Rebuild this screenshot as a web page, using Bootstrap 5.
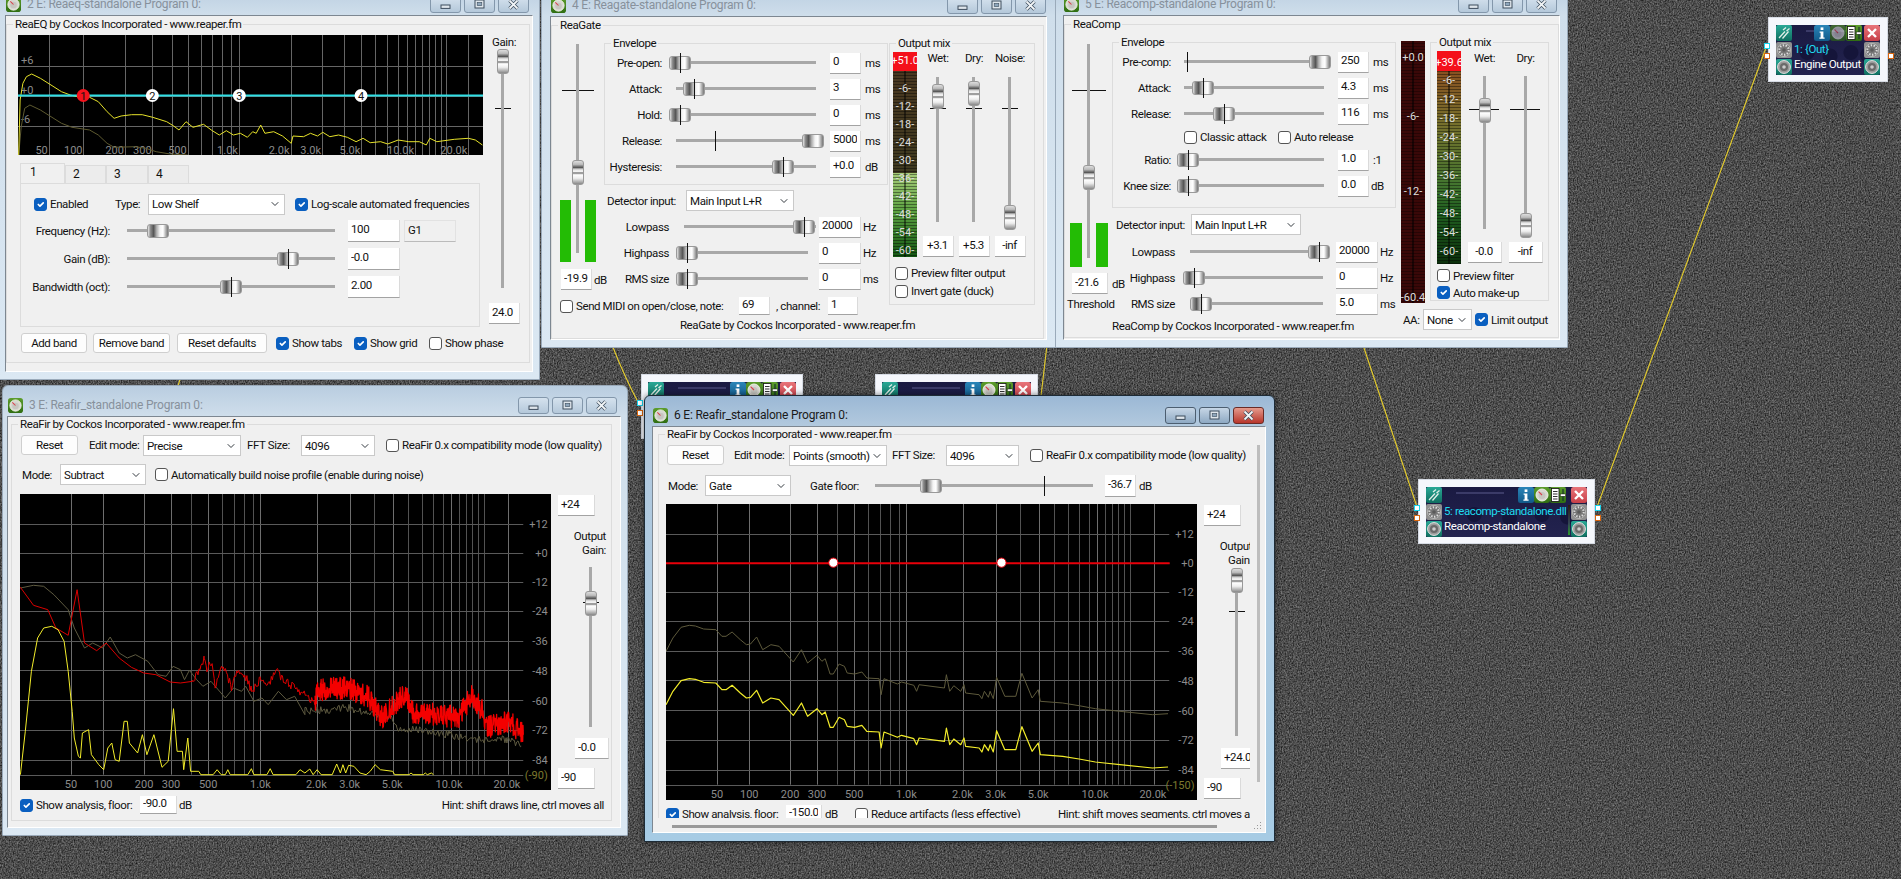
<!doctype html>
<html lang="en">
<head>
<meta charset="utf-8">
<title>REAPER FX routing</title>
<link href="https://cdn.jsdelivr.net/npm/bootstrap@5.3.0/dist/css/bootstrap.min.css" rel="stylesheet">
<style>
html,body{height:100%;margin:0;overflow:hidden;background:#444}
.desk{position:relative;width:1901px;height:879px;overflow:hidden;font-family:Roboto,"Liberation Sans",sans-serif;font-size:11.5px;letter-spacing:-.4px;line-height:14px;color:#111}
.bgn{position:absolute;left:0;top:0}
.win{position:absolute;padding:0 8px 8px;background:linear-gradient(#b9cde0,#cfdeeb 30px,#dbe8f3);border:1px solid #9aaaba;border-radius:6px 6px 0 0;white-space:nowrap}
.tb{height:31px;padding:9px 2px 0 1px;margin-top:-1px;color:#87919c;font-size:12px;letter-spacing:-.2px}
.tb>svg{width:15px;height:15px;margin-right:6px}
.cap{width:31px;height:17px;padding:0;border:1px solid #8397ab;border-radius:3px;background:linear-gradient(#d5e2ee,#b4c8da);margin-left:3px;display:flex;align-items:center;justify-content:center;color:#444}
.cap svg{width:11px;height:11px}
.cl{position:relative;background:#f0f0f0;border-top:1px solid #7d8791;border-left:1px solid #7d8791;border-right:1px solid #fff;border-bottom:1px solid #fff}
.cl *{flex-shrink:0}
.w2{left:-4px;top:-16px;width:544px;height:396px}
.w3{left:2px;top:385px;width:626px;height:451px;padding-left:4px}
.w4{left:541px;top:-15px;width:516px;height:363px;padding-left:8px}
.w5{left:1055px;top:-16px;width:513px;height:364px;padding-left:7px}
.w6{left:644px;top:395px;width:631px;height:447px;padding-left:7px;background:linear-gradient(#9bb8d5,#b2c9de 30px,#a6cbe4);border-color:#1d2b36;box-shadow:0 0 6px #0008}
.w6 .tb{color:#1a1a1a}
.w6 .cap{background:linear-gradient(#c6d6e6,#8ea9c3);border-color:#4c5e70}
.w6 .cap.cls{background:linear-gradient(#e59b8d,#b8352a);color:#fff;border-color:#6a2b26}
.c2{width:528px;height:357px}
.c3{width:614px;height:412px}
.c4{width:497px;height:324px}
.c5{width:497px;height:325px}
.c6{width:614px;height:407px}
.gb{border:1px solid #dcdcdc;padding:0;margin:0;min-width:0}
.gb>legend{float:none;width:auto;font-size:11.5px;line-height:14px;margin:0 0 0 6px;padding:0 2px}
.g2{width:524px;height:346px;margin-top:1px}
.g3{width:601px;height:404px;margin-left:3px}
.g4{width:493px;height:321px;margin-left:0}
.g5{width:495px;height:321px}
.g6{width:602px;height:420px;margin-left:5px}
.gs4{height:149px}
.gs5{height:173px}
.gm4{width:146px;height:269px}
.gm5{width:119px;height:266px}
.form-control.ti{height:21px;min-height:0;padding:0 3px 3px;font-size:11.5px;letter-spacing:-.4px;line-height:14px;border:0;border-bottom:1px solid #a3a3a3;border-right:1px solid #dadada;border-radius:0;background:#fff;color:#111}
.form-control.t22{height:22px}
.form-control.t18{height:18px}
.form-control.gy{background:#f0f0f0;border:1px solid #e2e2e2;border-bottom-color:#bbb}
.form-select.cb{height:21px;font-size:11.5px;letter-spacing:-.4px;line-height:14px;padding:0 16px 0 3px;border:1px solid #c9c9c9;border-radius:0;background-color:#fff;background-position:right 4px center;background-size:10px 8px;color:#111}
.btn.bt{height:20px;font-size:11.5px;letter-spacing:-.4px;line-height:14px;padding:0;background:#fdfdfd;border:1px solid #cfcfcf;border-radius:3px;color:#111}
.ck{white-space:nowrap;gap:3px}
.form-check-input.cx{width:13px;height:13px;margin:0;border:1px solid #555;border-radius:3px;background-color:#fff}
.form-check-input.cx:checked{background-color:#0a5fc0;border-color:#0a5fc0}
.hs{position:relative;height:20px}
.hs::before{content:"";position:absolute;left:0;right:0;top:8px;height:3px;background:#a8a8a8}
.hs i{position:absolute;left:calc(var(--t)*1px - 11px);top:3px;width:22px;height:14px;border:1px solid #9a9a9a;border-radius:3px;background:linear-gradient(90deg,#e6e6e6,#8e8e8e 12%,#555 28%,#aaa 42%,#f4f4f4 60%,#fff 75%,#aaa 90%,#777)}
.hs s{position:absolute;left:calc(var(--k)*1px);top:0;width:1px;height:20px;background:#111}
.vs{position:relative;width:14px}
.vs::before{content:"";position:absolute;left:5px;width:3px;top:0;bottom:0;background:#a8a8a8;z-index:1}
.vs i{position:absolute;left:1px;top:calc(var(--t)*1px);width:12px;height:25px;z-index:2;border:1px solid #999;border-radius:3px;background:linear-gradient(#ddd,#bbb 15%,#555 28%,#ccc 35%,#fff 45%,#777 52%,#fff 60%,#eee 75%,#888)}
.vs s{position:absolute;top:calc(var(--k)*1px);height:1px;left:calc(6.5px - var(--h)*1px);width:calc(var(--h)*2px);background:#111}
.bar{background:#23bc05;width:11px}
.mt{position:relative;overflow:hidden;text-align:center;color:#ddd;font-size:11px;letter-spacing:0;line-height:18px;width:24px}
.mt b{display:block;font-weight:400;color:#fff;background:#f4101a;height:19px;line-height:18px;white-space:nowrap;margin:0 -4px}
.mg{background:linear-gradient(90deg,#0000 11px,#0007 11px,#0007 13px,#0000 13px),repeating-linear-gradient(#0000 0 2px,#0006 2px 3px),linear-gradient(#4a3620 0,#3f3a20 59%,#a6cc78 59%,#5aa040 78%,#125512 100%)}
.mo{background:linear-gradient(90deg,#0000 11px,#0007 11px,#0007 13px,#0000 13px),repeating-linear-gradient(#0000 0 2px,#0006 2px 3px),linear-gradient(#8a4f20 8%,#75702c 35%,#44752f 62%,#1f5e1f 76%,#0b2f0b)}
.mb{background:linear-gradient(90deg,#0000 11px,#0008 11px,#0008 13px,#0000 13px),repeating-linear-gradient(#0000 0 2px,#0005 2px 3px),#3a0808;line-height:14px}
.mb span{display:block;white-space:nowrap;margin-left:-3px;margin-right:-3px}
.mo div{height:19px;line-height:19px}
.mo b{height:20px;line-height:24px}
.chart{background:#000;display:block}
.chart text{font:11px Roboto,"Liberation Sans",sans-serif;letter-spacing:0;fill:#8c8c8c}
.tabs{border:0;flex-wrap:nowrap}
.tabs .nav-link{display:block;height:18px;padding:1px 0 0 7px;border:1px solid #dcdcdc;border-bottom:0;border-radius:0;margin:0;color:#111;background:#ececec;font-size:12px;line-height:14px}
.tabs .nav-link.active{height:20px;padding-left:9px;background:#f0f0f0;color:#111;border-color:#dcdcdc}
.panel{height:144px;border:1px solid #dcdcdc}
.clip{width:597px;height:391px;overflow:hidden}
.hsb{height:3px;background:#9a9a9a;width:545px;margin:7px 0 0 19px}
.vsb{width:3px;height:337px;background:#bdbdbd;margin:18px 0 0 7px}
.grip{position:absolute;right:3px;bottom:2px;width:9px;height:9px}
.node{position:absolute;background:#f5f7fc;box-shadow:0 0 0 1px #d6dbe4;padding:7px;white-space:nowrap}
.n1{left:1769px;top:18px;width:118px;height:63px}
.n2{left:642px;top:375px;width:160px;height:63px;padding:7px 6px}
.n3{left:876px;top:375px;width:161px;height:63px;padding:7px 6px}
.n5{left:1419px;top:480px;width:175px;height:63px}
.art{height:50px;background:radial-gradient(circle at 30% 55%,#15153a 0 7px,#0000 8px),radial-gradient(circle at 52% 62%,#15153a 0 7px,#0000 8px),radial-gradient(circle at 72% 55%,#15153a 0 7px,#0000 8px),radial-gradient(circle at 88% 60%,#15153a 0 7px,#0000 8px),linear-gradient(#1a1a42,#23234f);overflow:hidden}
.art svg{width:16px;height:16px;display:block}
.art .ico{gap:1px}
.ctr{padding-left:2px;min-width:0}
.ctr .top{height:16px;gap:0;padding-right:2px;background:linear-gradient(#3b3b68,#3b3b68) no-repeat 12px 5px/48px 2px}
.nm{color:#1fdcf0;font-size:11.5px;letter-spacing:-.4px;line-height:15px;margin-top:1px}
.nw{color:#fff;font-size:11.5px;letter-spacing:-.4px;line-height:15px}
.mtr{width:2px;height:30px;margin:18px 1px 0 0;background:linear-gradient(#2a1a10,#345 60%,#2a9a2a)}
.dim{opacity:.6}
.pin{position:absolute;width:6px;height:6px;background:#fff;border:1.5px solid #d9660f}
.pin.c{border-color:#19d4ee}
.w11{width:11px}.w12{width:12px}.w20x{width:20px}.w24{width:24px}.w30{width:30px}.w31{width:31px}.w33{width:33px}.w34{width:34px}.w36{width:36px}.w37{width:37px}.w38{width:38px}.w41{width:41px}.w42{width:42px}.w45{width:45px}.w47{width:47px}.w49{width:49px}.w52{width:52px}.w54{width:54px}.w55{width:55px}.w57{width:57px}.w58{width:58px}.w61{width:61px}.w63{width:63px}.w65{width:65px}.w66{width:66px}.w73{width:73px}.w74{width:74px}.w75{width:75px}.w77{width:77px}.w78{width:78px}.w79{width:79px}.w81{width:81px}.w86{width:86px}.w89{width:89px}.w90{width:90px}.w94{width:94px}.w98{width:98px}.w108{width:108px}.w110{width:110px}.w120{width:120px}.w132{width:132px}.w133{width:133px}.w134{width:134px}.w137{width:137px}.w139{width:139px}.w140{width:140px}.w179{width:179px}.w203{width:203px}.w208{width:208px}.w218{width:218px}.w284{width:284px}.w336{width:336px}.w337{width:337px}.w460{width:460px}.w465{width:465px}
.l1{margin-left:1px}.l2{margin-left:2px}.l3{margin-left:3px}.l4{margin-left:4px}.l5{margin-left:5px}.l6{margin-left:6px}.l7{margin-left:7px}.l8{margin-left:8px}.l9{margin-left:9px}.l10{margin-left:10px}.l11{margin-left:11px}.l12{margin-left:12px}.l13{margin-left:13px}.l14{margin-left:14px}.l15{margin-left:15px}.l17{margin-left:17px}.l19{margin-left:19px}.l24x{margin-left:24px}.l33x{margin-left:33px}.l71{margin-left:71px}
.t1{margin-top:1px}.t2{margin-top:2px}.t3{margin-top:3px}.t4{margin-top:4px}.t5{margin-top:5px}.t6{margin-top:6px}.t7{margin-top:7px}.t8{margin-top:8px}.t9{margin-top:9px}.t10{margin-top:10px}.t11{margin-top:11px}.t12{margin-top:12px}.t13{margin-top:13px}.t15{margin-top:15px}
.rw26{height:26px}.rw28{height:28px}.rw18{height:18px}.rw17{height:17px}.rw20{height:20px}.rw21{height:21px}.rw22{height:22px}.rw23{height:23px}
.h44{height:44px}.h62{height:62px}.h145{height:145px}.h153{height:153px}.h160{height:160px}.h168{height:168px}.h205{height:205px}.h206{height:206px}.h209{height:209px}.h212{height:212px}.h213{height:213px}.h214{height:214px}.h218{height:218px}.h223{height:223px}.h239{height:239px}.h262{height:262px}
.mb .mg6{margin-top:45px}.mb .mg7{margin-top:61px}.mb .mg8{margin-top:92px}
.r7{margin-right:7px}
</style>
</head>
<body>
<div class="desk">
<svg width="0" height="0" class="position-absolute">
  <defs>
    <linearGradient id="gT" x1="0" y1="0" x2="0" y2="1"><stop offset="0" stop-color="#2aa896"/><stop offset="1" stop-color="#0f6f60"/></linearGradient>
    <linearGradient id="gG" x1="0" y1="0" x2="0" y2="1"><stop offset="0" stop-color="#5d9d2c"/><stop offset="1" stop-color="#2f6d12"/></linearGradient>
    <linearGradient id="gB" x1="0" y1="0" x2="0" y2="1"><stop offset="0" stop-color="#2a85b8"/><stop offset="1" stop-color="#125a8a"/></linearGradient>
    <linearGradient id="gR" x1="0" y1="0" x2="0" y2="1"><stop offset="0" stop-color="#e8747a"/><stop offset="1" stop-color="#c73f48"/></linearGradient>
  </defs>
  <symbol id="link" viewBox="0 0 16 16"><rect width="16" height="16" rx="2" fill="url(#gT)"/><path d="M3 13 9 6.5M6.5 13.5l6-7M7 5l3-2.5M10.5 6l3-2.5" stroke="#dfeee8" stroke-width="1.3" fill="none"/></symbol>
  <symbol id="dial" viewBox="0 0 16 16"><rect width="16" height="16" rx="2" fill="#8f8f8f"/><circle cx="8" cy="8" r="6.6" fill="#777" stroke="#b4b4b4"/><circle cx="8" cy="8" r="4.7" fill="none" stroke="#ddd" stroke-width="2" stroke-dasharray="1.4 1.5"/><circle cx="8" cy="8" r="1.8" fill="#5a5a5a"/></symbol>
  <symbol id="spk" viewBox="0 0 16 16"><rect width="16" height="16" rx="2" fill="url(#gT)"/><circle cx="8" cy="8" r="6.4" fill="#9a9a9a" stroke="#e4e4e4"/><circle cx="8" cy="8" r="4" fill="#6a6a6a"/><circle cx="8" cy="8" r="1.8" fill="#ccc"/></symbol>
  <symbol id="info" viewBox="0 0 16 16"><rect width="16" height="16" rx="2.5" fill="url(#gB)"/><rect x="6.6" y="2.4" width="2.8" height="2.6" fill="#fff"/><path d="M5.6 6.4h3.8v6h1.2v1.4H5.4v-1.4h1.2V7.8h-1z" fill="#fff"/></symbol>
  <symbol id="gauge" viewBox="0 0 16 16"><rect width="16" height="16" rx="3" fill="url(#gG)"/><circle cx="8" cy="8" r="6" fill="#d8d8d2" stroke="#eef2e4"/><circle cx="8" cy="8.5" r="3.5" fill="#c6c6c0"/><path d="M4.6 4.6 8 8" stroke="#d8404a" stroke-width="1.1"/></symbol>
  <symbol id="fader" viewBox="0 0 16 16"><rect width="16" height="16" rx="2" fill="url(#gG)"/><rect x="1.5" y="1.5" width="7.5" height="13" fill="#fff" stroke="#111" stroke-width=".8"/><path d="M3 4.5h4.5M3 7h4.5M3 9.5h4.5M3 12h4.5" stroke="#333" stroke-width="1.1"/><path d="M13 2v12" stroke="#123" stroke-width="1"/><rect x="10.4" y="7" width="5" height="2.2" fill="#fff" stroke="#111" stroke-width=".4"/></symbol>
  <symbol id="xic" viewBox="0 0 16 16"><rect width="16" height="16" rx="2.5" fill="url(#gR)"/><path d="M4 4 12 12M12 4 4 12" stroke="#fff" stroke-width="2.4"/></symbol>
  <symbol id="cmin" viewBox="0 0 11 11"><rect x="1" y="6" width="9" height="3.4" fill="#dfe6ec" stroke="#3c4c5c"/></symbol>
  <symbol id="cmax" viewBox="0 0 11 11"><rect x="1" y="1" width="9" height="8" fill="#dfe6ec" stroke="#3c4c5c"/><rect x="3.2" y="3.4" width="4.6" height="3.2" fill="#8ea6bc" stroke="#3c4c5c" stroke-width=".6"/></symbol>
  <symbol id="cx" viewBox="0 0 11 11"><path d="M1.5 1.5 9.5 9.5M9.5 1.5 1.5 9.5" stroke="#3c4c5c" stroke-width="3.2"/><path d="M1.5 1.5 9.5 9.5M9.5 1.5 1.5 9.5" stroke="#f2f5f7" stroke-width="1.8"/></symbol>
</svg>

<svg class="bgn" width="1901" height="879" aria-hidden="true">
  <filter id="noise" x="0" y="0" width="100%" height="100%" color-interpolation-filters="sRGB">
    <feTurbulence type="fractalNoise" baseFrequency=".75 .6" numOctaves="2" seed="4"/>
    <feColorMatrix values=".55 0 0 0 .025  .55 0 0 0 .025  .55 0 0 0 .025  0 0 0 0 1"/>
  </filter>
  <rect width="1901" height="879" filter="url(#noise)"/>
  <g fill="none" stroke="#e8cf2c" stroke-width="1.1">
    <path d="M1597 507 1767 45"/>
    <path d="M1363 345 1417 507"/>
    <path d="M1047 345 1041 396"/>
    <path d="M612 345 Q626 380 638 402"/>
    <path d="M181 376 178 386"/>
  </g>
</svg>

<!-- nodes -->
<div class="node n2"><div class="art d-flex"><svg class="d-block"><use href="#link"/></svg><div class="ctr flex-fill"><div class="top d-flex justify-content-end"><svg><use href="#info"/></svg><svg><use href="#gauge"/></svg><svg><use href="#fader"/></svg></div></div><svg class="d-block"><use href="#xic"/></svg></div></div>
<div class="node n3"><div class="art d-flex"><svg class="d-block"><use href="#link"/></svg><div class="ctr flex-fill"><div class="top d-flex justify-content-end"><svg><use href="#info"/></svg><svg><use href="#gauge"/></svg><svg><use href="#fader"/></svg></div></div><svg class="d-block"><use href="#xic"/></svg></div></div>
<i class="pin c" style="left:637px;top:400px"></i><i class="pin" style="left:637px;top:410px"></i>

<div class="node n5"><div class="art d-flex">
  <div class="ico d-flex flex-column"><svg><use href="#link"/></svg><svg><use href="#dial"/></svg><svg><use href="#spk"/></svg></div>
  <div class="ctr flex-fill"><div class="top d-flex justify-content-end"><svg><use href="#info"/></svg><svg><use href="#gauge"/></svg><svg><use href="#fader"/></svg></div><div class="nm">5: reacomp-standalone.dll</div><div class="nw">Reacomp-standalone</div></div>
  <div class="mtr"></div>
  <div class="ico d-flex flex-column"><svg><use href="#xic"/></svg><svg><use href="#dial"/></svg><svg><use href="#spk"/></svg></div>
</div></div>
<i class="pin c" style="left:1414px;top:505px"></i><i class="pin" style="left:1414px;top:515px"></i>
<i class="pin c" style="left:1595px;top:505px"></i><i class="pin" style="left:1595px;top:515px"></i>

<div class="node n1"><div class="art d-flex">
  <div class="ico d-flex flex-column"><svg><use href="#link"/></svg><svg><use href="#dial"/></svg><svg><use href="#spk"/></svg></div>
  <div class="ctr flex-fill"><div class="top d-flex justify-content-end"><svg><use href="#info"/></svg><svg class="dim"><use href="#gauge"/></svg><svg><use href="#fader"/></svg></div><div class="nm">1: {Out}</div><div class="nw">Engine Output</div></div>
  <div class="ico d-flex flex-column"><svg><use href="#xic"/></svg><svg><use href="#dial"/></svg><svg><use href="#spk"/></svg></div>
</div></div>
<i class="pin c" style="left:1764px;top:43px"></i><i class="pin" style="left:1764px;top:53px"></i><i class="pin" style="left:1888px;top:53px"></i>

<!-- ReaEQ -->
<div class="win w2">
  <div class="tb d-flex align-items-center"><svg><use href="#gauge"/></svg><span>2 E: Reaeq-standalone Program 0:</span><div class="ms-auto d-flex"><button class="cap"><svg><use href="#cmin"/></svg></button><button class="cap"><svg><use href="#cmax"/></svg></button><button class="cap"><svg><use href="#cx"/></svg></button></div></div>
  <div class="cl c2">
    <fieldset class="gb g2"><legend>ReaEQ by Cockos Incorporated - www.reaper.fm</legend>
      <div class="d-flex">
        <div class="w465 l11">
          <svg id="cEq" class="chart t4" width="465" height="120"></svg>
          <ul class="nav nav-tabs tabs l2 t8 align-items-end">
            <li class="nav-item w45"><a class="nav-link active" href="#">1</a></li>
            <li class="nav-item w41"><a class="nav-link" href="#">2</a></li>
            <li class="nav-item w42"><a class="nav-link" href="#">3</a></li>
            <li class="nav-item w41"><a class="nav-link" href="#">4</a></li>
          </ul>
          <div class="panel w460 l2">
            <div class="d-flex align-items-center rw20 t10">
              <label class="ck d-flex align-items-center w81 l13"><input class="form-check-input cx" type="checkbox" checked><span>Enabled</span></label>
              <span class="w33">Type:</span>
              <select class="form-select cb w137"><option>Low Shelf</option></select>
              <label class="ck d-flex align-items-center l10"><input class="form-check-input cx" type="checkbox" checked><span>Log-scale automated frequencies</span></label>
            </div>
            <div class="t3">
              <div class="d-flex align-items-center rw28"><span class="w89 text-end">Frequency (Hz):</span><div class="hs w208 l17" style="--t:31"><i></i></div><input class="form-control ti t22 w52 l13" value="100"><input class="form-control ti t22 gy w52 l4" value="G1"></div>
              <div class="d-flex align-items-center rw28"><span class="w89 text-end">Gain (dB):</span><div class="hs w208 l17" style="--t:161;--k:161"><i></i><s></s></div><input class="form-control ti t22 w52 l13" value="-0.0"></div>
              <div class="d-flex align-items-center rw28"><span class="w89 text-end">Bandwidth (oct):</span><div class="hs w208 l17" style="--t:104;--k:104"><i></i><s></s></div><input class="form-control ti t22 w52 l13" value="2.00"></div>
            </div>
          </div>
        </div>
        <div class="w52">
          <div class="l9 t4">Gain:</div>
          <div class="vs h239 l13" style="--t:0;--k:59;--h:8"><s></s><i></i></div>
          <input class="form-control ti w31 l6 t15" value="24.0">
        </div>
      </div>
      <div class="d-flex align-items-center t6">
        <button class="btn bt w66 l14">Add band</button><button class="btn bt w77 l6">Remove band</button><button class="btn bt w90 l7">Reset defaults</button>
        <label class="ck d-flex align-items-center w78 l9"><input class="form-check-input cx" type="checkbox" checked><span>Show tabs</span></label>
        <label class="ck d-flex align-items-center w75"><input class="form-check-input cx" type="checkbox" checked><span>Show grid</span></label>
        <label class="ck d-flex align-items-center"><input class="form-check-input cx" type="checkbox"><span>Show phase</span></label>
      </div>
    </fieldset>
  </div>
</div>

<!-- ReaFir 3 -->
<div class="win w3">
  <div class="tb d-flex align-items-center"><svg><use href="#gauge"/></svg><span>3 E: Reafir_standalone Program 0:</span><div class="ms-auto d-flex"><button class="cap"><svg><use href="#cmin"/></svg></button><button class="cap"><svg><use href="#cmax"/></svg></button><button class="cap"><svg><use href="#cx"/></svg></button></div></div>
  <div class="cl c3">
    <fieldset class="gb g3"><legend>ReaFir by Cockos Incorporated - www.reaper.fm</legend>
      <div class="d-flex align-items-start rw22 t4">
        <button class="btn bt w57 l9">Reset</button><span class="w54 l11 t3">Edit mode:</span><select class="form-select cb w98"><option>Precise</option></select><span class="w54 l6 t3">FFT Size:</span><select class="form-select cb w74"><option>4096</option></select>
        <label class="ck d-flex align-items-center l11 t3"><input class="form-check-input cx" type="checkbox"><span>ReaFir 0.x compatibility mode (low quality)</span></label>
      </div>
      <div class="d-flex align-items-center rw21 t7">
        <span class="w38 l10">Mode:</span><select class="form-select cb w86"><option>Subtract</option></select>
        <label class="ck d-flex align-items-center l9"><input class="form-check-input cx" type="checkbox"><span>Automatically build noise profile (enable during noise)</span></label>
      </div>
      <div class="d-flex t9">
        <svg id="cF3" class="chart l8" width="531" height="296"></svg>
        <div class="w61">
          <input class="form-control ti w37 l7 t1" value="+24">
          <div class="w55 text-end t13">Output<br>Gain:</div>
          <div class="vs h160 t10 l33x" style="--t:24;--k:35;--h:8"><s></s><i></i></div>
          <input class="form-control ti w34 t11 l24x" value="-0.0">
          <input class="form-control ti w37 l7 t9" value="-90">
        </div>
      </div>
      <div class="d-flex align-items-center t6">
        <label class="ck d-flex align-items-center w120 l8"><input class="form-check-input cx" type="checkbox" checked><span>Show analysis, floor:</span></label>
        <input class="form-control ti t18 w37" value="-90.0"><span class="l2">dB</span>
        <span class="ms-auto r7">Hint: shift draws line, ctrl moves all</span>
      </div>
    </fieldset>
  </div>
</div>

<!-- ReaGate -->
<div class="win w4">
  <div class="tb d-flex align-items-center"><svg><use href="#gauge"/></svg><span>4 E: Reagate-standalone Program 0:</span><div class="ms-auto d-flex"><button class="cap"><svg><use href="#cmin"/></svg></button><button class="cap"><svg><use href="#cmax"/></svg></button><button class="cap"><svg><use href="#cx"/></svg></button></div></div>
  <div class="cl c4">
    <fieldset class="gb g4 t1"><legend>ReaGate</legend>
      <div class="d-flex">
        <div class="w337">
          <div class="d-flex">
            <div class="w52">
              <div class="d-flex align-items-end h218 t12 l8"><div class="bar h62"></div><div class="vs h209 align-self-start" style="--t:116;--k:46;--h:16"><s></s><i></i></div><div class="bar h62"></div></div>
              <div class="d-flex align-items-center t7 l9"><input class="form-control ti w31" value="-19.9"><span class="l2">dB</span></div>
            </div>
            <div class="w284">
              <fieldset class="gb gs4 t4"><legend>Envelope</legend>
                <div class="d-flex align-items-center rw26"><span class="w57 text-end">Pre-open:</span><div class="hs w140 l14" style="--t:4;--k:4"><i></i><s></s></div><input class="form-control ti w31 l14" value="0"><span class="l4">ms</span></div>
                <div class="d-flex align-items-center rw26"><span class="w57 text-end">Attack:</span><div class="hs w140 l14" style="--t:18;--k:18"><i></i><s></s></div><input class="form-control ti w31 l14" value="3"><span class="l4">ms</span></div>
                <div class="d-flex align-items-center rw26"><span class="w57 text-end">Hold:</span><div class="hs w140 l14" style="--t:4;--k:4"><i></i><s></s></div><input class="form-control ti w31 l14" value="0"><span class="l4">ms</span></div>
                <div class="d-flex align-items-center rw26"><span class="w57 text-end">Release:</span><div class="hs w140 l14" style="--t:137;--k:39"><i></i><s></s></div><input class="form-control ti w31 l14" value="5000"><span class="l4">ms</span></div>
                <div class="d-flex align-items-center rw26"><span class="w57 text-end">Hysteresis:</span><div class="hs w140 l14" style="--t:107;--k:107"><i></i><s></s></div><input class="form-control ti w31 l14" value="+0.0"><span class="l4">dB</span></div>
              </fieldset>
              <div class="d-flex align-items-center t5 l3"><span class="w79">Detector input:</span><select class="form-select cb w108"><option>Main Input L+R</option></select></div>
              <div class="t3">
                <div class="d-flex align-items-center rw26"><span class="w65 text-end">Lowpass</span><div class="hs w132 l15" style="--t:120;--k:120"><i></i><s></s></div><input class="form-control ti w42 l3" value="20000"><span class="l2">Hz</span></div>
                <div class="d-flex align-items-center rw26"><span class="w65 text-end">Highpass</span><div class="hs w132 l7" style="--t:11;--k:11"><i></i><s></s></div><input class="form-control ti w42 l11" value="0"><span class="l2">Hz</span></div>
                <div class="d-flex align-items-center rw26"><span class="w65 text-end">RMS size</span><div class="hs w132 l7" style="--t:11;--k:11"><i></i><s></s></div><input class="form-control ti w42 l11" value="0"><span class="l2">ms</span></div>
              </div>
            </div>
          </div>
          <div class="d-flex align-items-center t5">
            <label class="ck d-flex align-items-center w179 l8"><input class="form-check-input cx" type="checkbox"><span>Send MIDI on open/close, note:</span></label>
            <input class="form-control ti t18 w31" value="69"><span class="w52 l6">, channel:</span><input class="form-control ti t18 w30" value="1">
          </div>
        </div>
        <fieldset class="gb gm4 t4"><legend>Output mix</legend>
          <div class="d-flex">
            <div class="mt mg h205 t2 l3"><b>+51.0</b><div class="t9"></div><div>-6-</div><div>-12-</div><div>-18-</div><div>-24-</div><div>-30-</div><div>-36-</div><div>-42-</div><div>-48-</div><div>-54-</div><div>-60-</div></div>
            <div class="d-flex l3 t1">
              <div class="w36 h206 d-flex flex-column align-items-center"><span>Wet:</span><div class="vs h145 t12" style="--t:7;--k:31;--h:8"><s></s><i></i></div><input class="form-control ti w31 mt-auto text-center" value="+3.1"></div>
              <div class="w36 h206 d-flex flex-column align-items-center"><span>Dry:</span><div class="vs h145 t12" style="--t:4;--k:31;--h:8"><s></s><i></i></div><input class="form-control ti w31 mt-auto text-center" value="+5.3"></div>
              <div class="w36 h206 d-flex flex-column align-items-center"><span>Noise:</span><div class="vs h153 t12" style="--t:128;--k:31;--h:8"><s></s><i></i></div><input class="form-control ti w31 mt-auto text-center" value="-inf"></div>
            </div>
          </div>
          <label class="ck d-flex align-items-center rw18 l5 t7"><input class="form-check-input cx" type="checkbox"><span>Preview filter output</span></label>
          <label class="ck d-flex align-items-center rw18 l5"><input class="form-check-input cx" type="checkbox"><span>Invert gate (duck)</span></label>
        </fieldset>
      </div>
      <div class="text-center t3">ReaGate by Cockos Incorporated - www.reaper.fm</div>
    </fieldset>
  </div>
</div>

<!-- ReaComp -->
<div class="win w5">
  <div class="tb d-flex align-items-center"><svg><use href="#gauge"/></svg><span>5 E: Reacomp-standalone Program 0:</span><div class="ms-auto d-flex"><button class="cap"><svg><use href="#cmin"/></svg></button><button class="cap"><svg><use href="#cmax"/></svg></button><button class="cap"><svg><use href="#cx"/></svg></button></div></div>
  <div class="cl c5">
    <fieldset class="gb g5 t1"><legend>ReaComp</legend>
      <div class="d-flex">
        <div class="w336">
          <div class="d-flex">
            <div class="w47">
              <div class="d-flex align-items-end h223 t13 l5"><div class="bar w12 h44"></div><div class="vs h214 align-self-start" style="--t:121;--k:46;--h:17"><s></s><i></i></div><div class="bar w12 h44"></div></div>
              <div class="d-flex align-items-center t6 l7"><input class="form-control ti w36" value="-21.6"><span class="l4">dB</span></div>
              <div class="l2 t3">Threshold</div>
            </div>
            <div class="w284">
              <fieldset class="gb gs5 t4"><legend>Envelope</legend>
                <div class="d-flex align-items-center rw26"><span class="w58 text-end">Pre-comp:</span><div class="hs w140 l13" style="--t:136;--k:3"><i></i><s></s></div><input class="form-control ti w31 l14" value="250"><span class="l4">ms</span></div>
                <div class="d-flex align-items-center rw26"><span class="w58 text-end">Attack:</span><div class="hs w140 l13" style="--t:19;--k:19"><i></i><s></s></div><input class="form-control ti w31 l14" value="4.3"><span class="l4">ms</span></div>
                <div class="d-flex align-items-center rw26"><span class="w58 text-end">Release:</span><div class="hs w140 l13" style="--t:40;--k:40"><i></i><s></s></div><input class="form-control ti w31 l14" value="116"><span class="l4">ms</span></div>
                <div class="d-flex align-items-center rw20 l71"><label class="ck d-flex align-items-center w94"><input class="form-check-input cx" type="checkbox"><span>Classic attack</span></label><label class="ck d-flex align-items-center"><input class="form-check-input cx" type="checkbox"><span>Auto release</span></label></div>
                <div class="d-flex align-items-center rw26"><span class="w58 text-end">Ratio:</span><div class="hs w140 l13" style="--t:4;--k:4"><i></i><s></s></div><input class="form-control ti w31 l14" value="1.0"><span class="l4">:1</span></div>
                <div class="d-flex align-items-center rw26"><span class="w58 text-end">Knee size:</span><div class="hs w140 l13" style="--t:4;--k:4"><i></i><s></s></div><input class="form-control ti w31 l14" value="0.0"><span class="l2">dB</span></div>
              </fieldset>
              <div class="d-flex align-items-center t6 l4"><span class="w75">Detector input:</span><select class="form-select cb w110"><option>Main Input L+R</option></select></div>
              <div class="t4">
                <div class="d-flex align-items-center rw26"><span class="w63 text-end">Lowpass</span><div class="hs w134 l15" style="--t:129;--k:129"><i></i><s></s></div><input class="form-control ti w42 l12" value="20000"><span class="l2">Hz</span></div>
                <div class="d-flex align-items-center rw26"><span class="w63 text-end">Highpass</span><div class="hs w139 l9" style="--t:10;--k:10"><i></i><s></s></div><input class="form-control ti w42 l13" value="0"><span class="l2">Hz</span></div>
                <div class="d-flex align-items-center rw26"><span class="w63 text-end">RMS size</span><div class="hs w133 l15" style="--t:11;--k:11"><i></i><s></s></div><input class="form-control ti w42 l13" value="5.0"><span class="l2">ms</span></div>
              </div>
            </div>
          </div>
          <div class="text-center t2">ReaComp by Cockos Incorporated - www.reaper.fm</div>
        </div>
        <div>
          <div class="d-flex">
            <div class="mt mb h262 t10"><span class="t10">+0.0</span><span class="mg6">-6-</span><span class="mg7">-12-</span><span class="mg8">-60.4</span></div>
            <fieldset class="gb gm5 l5 t4"><legend>Output mix</legend>
              <div class="d-flex">
                <div class="mt mo h213 t2 l6"><b>+39.6</b><div>-6-</div><div>-12-</div><div>-18-</div><div>-24-</div><div>-30-</div><div>-36-</div><div>-42-</div><div>-48-</div><div>-54-</div><div>-60-</div></div>
                <div class="d-flex l3 t2">
                  <div class="w41 h212 d-flex flex-column align-items-center"><span>Wet:</span><div class="vs t11 h153" style="--t:22;--k:33;--h:15"><s></s><i></i></div><input class="form-control ti w34 mt-auto text-center" value="-0.0"></div>
                  <div class="w41 h212 d-flex flex-column align-items-center"><span>Dry:</span><div class="vs t11 h160" style="--t:137;--k:33;--h:15"><s></s><i></i></div><input class="form-control ti w34 mt-auto text-center" value="-inf"></div>
                </div>
              </div>
              <label class="ck d-flex align-items-center rw17 l6 t3"><input class="form-check-input cx" type="checkbox"><span>Preview filter</span></label>
              <label class="ck d-flex align-items-center rw17 l6"><input class="form-check-input cx" type="checkbox" checked><span>Auto make-up</span></label>
            </fieldset>
          </div>
          <div class="d-flex align-items-center t6 l2"><span class="w20x">AA:</span><select class="form-select cb w49"><option>None</option></select><label class="ck d-flex align-items-center l3"><input class="form-check-input cx" type="checkbox" checked><span>Limit output</span></label></div>
        </div>
      </div>
    </fieldset>
  </div>
</div>

<!-- ReaFir 6 (active) -->
<div class="win w6">
  <div class="tb d-flex align-items-center"><svg><use href="#gauge"/></svg><span>6 E: Reafir_standalone Program 0:</span><div class="ms-auto d-flex"><button class="cap"><svg><use href="#cmin"/></svg></button><button class="cap"><svg><use href="#cmax"/></svg></button><button class="cap cls"><svg><use href="#cx"/></svg></button></div></div>
  <div class="cl c6 d-flex">
    <div>
      <div class="clip">
        <fieldset class="gb g6"><legend>ReaFir by Cockos Incorporated - www.reaper.fm</legend>
          <div class="d-flex align-items-start rw22 t4">
            <button class="btn bt w57 l8">Reset</button><span class="w55 l10 t3">Edit mode:</span><select class="form-select cb w98"><option>Points (smooth)</option></select><span class="w54 l5 t3">FFT Size:</span><select class="form-select cb w73"><option>4096</option></select>
            <label class="ck d-flex align-items-center l11 t3"><input class="form-check-input cx" type="checkbox"><span>ReaFir 0.x compatibility mode (low quality)</span></label>
          </div>
          <div class="d-flex align-items-center rw23 t7">
            <span class="w37 l9">Mode:</span><select class="form-select cb w86"><option>Gate</option></select><span class="w65 l19">Gate floor:</span>
            <div class="hs w218" style="--t:56;--k:169"><i></i><s></s></div><input class="form-control ti t22 w31 l12" value="-36.7"><span class="l3">dB</span>
          </div>
          <div class="d-flex t7">
            <svg id="cF6" class="chart l7" width="531" height="296"></svg>
            <div class="w61">
              <input class="form-control ti w37 l7 t1" value="+24">
              <div class="w55 text-end t13">Output<br>Gain:</div>
              <div class="vs h168 t1 l33x" style="--t:0;--k:43;--h:8"><s></s><i></i></div>
              <input class="form-control ti w37 t12 l24x" value="+24.0">
              <input class="form-control ti w37 l7 t9" value="-90">
            </div>
          </div>
          <div class="d-flex align-items-center t5">
            <label class="ck d-flex align-items-center w120 l7"><input class="form-check-input cx" type="checkbox" checked><span>Show analysis, floor:</span></label>
            <input class="form-control ti t18 w36" value="-150.0"><span class="w30 l3">dB</span>
            <label class="ck d-flex align-items-center w203"><input class="form-check-input cx" type="checkbox"><span>Reduce artifacts (less effective)</span></label>
            <span>Hint: shift moves segments, ctrl moves all</span>
          </div>
        </fieldset>
      </div>
      <div class="hsb"></div>
    </div>
    <div class="vsb"></div>
    <svg class="grip" viewBox="0 0 9 9"><path d="M7 1h1v1H7zM4 4h1v1H4zM7 4h1v1H7zM1 7h1v1H1zM4 7h1v1H4zM7 7h1v1H7z" fill="#999"/></svg>
  </div>
</div>
</div>

<script src="https://cdn.jsdelivr.net/npm/bootstrap@5.3.0/dist/js/bootstrap.bundle.min.js"></script>
<script>
const NS='http://www.w3.org/2000/svg';
function el(s,n,a,t){const e=document.createElementNS(NS,n);for(const k in a)e.setAttribute(k,a[k]);if(t!=null)e.textContent=t;s.appendChild(e);return e}
let seed=12345;function R(){seed=(seed*1664525+1013904223)>>>0;return seed/4294967296}
function mk(s,ox,oy,sx,sy){return{s,X:x=>(x-ox)/sx,Y:y=>(y-oy)/sy}}
function line(c,p,col,w,dy){dy=dy||0;el(c.s,'polyline',{points:p.map(q=>c.X(q[0]).toFixed(1)+','+c.Y(q[1]+dy).toFixed(1)).join(' '),fill:'none',stroke:col,'stroke-width':w||1,'stroke-linejoin':'round'})}
function jit(p,step,amp){const o=[];for(let i=0;i<p.length-1;i++){const[a,b]=p[i],[c,d]=p[i+1];for(let x=a;x<c;x+=step){const f=(x-a)/(c-a);o.push([x,b+(d-b)*f+(R()-.5)*2*amp])}}o.push(p[p.length-1]);return o}
function pts(a){const o=[];for(let i=0;i<a.length;i+=2)o.push([a[i],a[i+1]]);return o}

/* ReaEQ */
(function(){
 const c=mk(document.getElementById('cEq'),46,105,2.851,3),s=c.s;
 [135,232,352,429,486,532,568,600,628,654,677,825,913,976,1024,1064,1099,1130,1156,1178,1199,1217,1235,1252,1267,1330].forEach(x=>{const X=Math.round(c.X(x))+.5;el(s,'line',{x1:X,x2:X,y1:0,y2:120,stroke:'#666'})});
 [197,287,377].forEach(y=>{const Y=Math.round(c.Y(y))+.5;el(s,'line',{x1:0,x2:465,y1:Y,y2:Y,stroke:'#666'})});
 [['+6',3,29],['+0',3,59],['-6',3,88]].forEach(t=>el(s,'text',{x:t[1],y:t[2]},t[0]));
 [['50',131],['100',230],['200',348],['300',427],['500',527],['1.0k',673],['2.0k',820],['3.0k',910],['5.0k',1022],['10.0k',1175],['20.0k',1327]].forEach(t=>el(s,'text',{x:c.X(t[1]),y:119,'text-anchor':'end'},t[0]));
 line(c,pts([48,465,55,380,65,325,80,315,110,330,140,350,170,370,200,382,250,390,275,405,300,430,320,442,380,440,410,445,440,455,480,462,530,465]),'#5e5a30',1);
 line(c,pts([48,465,52,300,60,250,70,230,85,222,110,235,140,255,170,275,195,285,215,290,250,292,275,305,300,335,320,355,340,348,370,344,400,344,430,352,470,365,490,378,505,390,525,365,545,382,575,373,600,392,620,405,640,392,660,405,680,400,700,412,715,395,725,400,738,375,750,400,775,395,800,408,825,430,830,408,860,410,880,400,900,408,915,397,935,410,960,405,985,412,1010,425,1030,415,1050,428,1080,425,1100,432,1130,420,1160,425,1190,425,1210,435,1220,415,1240,425,1290,418,1330,415,1350,420,1370,435]),'#e6e22a',1);
 el(s,'line',{x1:0,x2:465,y1:60.5,y2:60.5,stroke:'#2fe0e6','stroke-width':2});
 [[232,'#f4121c','1'],[429,'#fff','2'],[677,'#fff','3'],[1024,'#fff','4']].forEach(h=>{const x=c.X(h[0]);el(s,'circle',{cx:x,cy:60.5,r:6.5,fill:h[1]});el(s,'text',{x,y:64.5,'text-anchor':'middle',style:'fill:#111'},h[2])});
})();

/* grid shared by both ReaFir displays */
function firGrid(c,dx,dy){
 const s=c.s,V=[172,251,351,417,466,508,543,572,597,619,636,775,855,914,961,998,1031,1059,1083,1104,1122,1140,1155,1170,1185,1243],B=[172,251,351,417,508,636,775,855,961,1104,1243];
 V.forEach(x=>{const X=Math.round(c.X(x+dx))+.5;el(s,'line',{x1:X,x2:X,y1:0,y2:c.Y(1210+dy),stroke:B.includes(x)?'#6e6e6e':'#525252'})});
 [458,545,632,720,808,897,987,1075,1165,1210].forEach(y=>{const Y=Math.round(c.Y(y+dy))+.5;el(s,'line',{x1:0,x2:c.X(1280+dx),y1:Y,y2:Y,stroke:'#5a5a5a'})});
 [['+12',458],['+0',545],['-12',632],['-24',720],['-36',810],['-48',898],['-60',988],['-72',1075],['-84',1165]].forEach(t=>el(s,'text',{x:c.X(1340+dx),y:c.Y(t[1]+dy)+4,'text-anchor':'end'},t[0]));
 [['50',172],['100',251],['200',351],['300',417],['500',508],['1.0k',636],['2.0k',773],['3.0k',855],['5.0k',959],['10.0k',1098],['20.0k',1240]].forEach(t=>el(s,'text',{x:c.X(t[1]+dx),y:c.Y(1237+dy)+4,'text-anchor':'middle'},t[0]));
}
/* ReaFir 3 */
(function(){
 const c=mk(document.getElementById('cF3'),47,368,2.45,3),s=c.s;
 firGrid(c,0,0);
 el(s,'text',{x:c.X(1340),y:c.Y(1210)+4,'text-anchor':'end',style:'fill:#7d7a2e'},'(-90)');
 const ol=pts([48,650,80,642,105,645,130,670,165,715,180,770,205,830,225,815,250,830,268,797,290,845,310,860,330,850,360,870,385,910,405,915,422,885,440,895,450,925,462,897,480,925,495,945,515,930,550,980,570,950,590,960,600,945,620,990,640,980,655,1000,680,960,700,985,720,975,745,1030]);
 line(c,ol.concat(jit(pts([745,1020,850,1010,960,1040,970,1070,1020,1075,1100,1090,1190,1108,1240,1105,1275,1125]),3,12)),'#5e5a40',1);
 const rd=pts([48,648,80,702,115,715,135,770,165,792,187,655,205,815,235,838,258,815,290,860,320,888,350,905,380,910,415,932,440,935,470,930]);
 line(c,rd.concat(jit(pts([470,930,490,895,498,860,505,895,515,870,525,940,545,880,565,945,580,895,595,905,615,960,635,925,655,940,675,900,690,920,720,950,770,995]),2.6,14)),'#dc0000',1);
 line(c,jit(pts([770,995,776,955,850,950,900,975,935,1040,990,965,1010,1025,1080,1030,1120,1040,1155,970,1180,1020,1185,1070,1245,1050,1280,1090]),.8,34),'#f40000',1.3);
 line(c,pts([48,1210,60,1080,75,900,90,800,105,770,125,765,140,775,155,810,165,900,175,1020,180,1100,190,1155,195,1160,200,1085,215,1075,222,1150,240,1180,252,1195,262,1130,272,1115,280,1165,290,1170,302,1050,310,1050,315,1115,335,1145,347,1090,358,1150,375,1090,395,1188,410,1170,423,1012,432,1140,445,1140,448,1195,458,1100,465,1200,485,1200,490,1210,520,1210,530,1195,540,1210,550,1210,556,1195,562,1210,605,1210,614,1192,620,1210,652,1210,660,1192,667,1210,723,1210,733,1195,745,1205,757,1193,765,1210,775,1195,785,1210,812,1210,823,1178,832,1205,838,1180,845,1205,852,1182,865,1185,880,1205,895,1210,905,1200,917,1180,930,1195,960,1200,965,1210,1000,1210,1005,1205,1010,1210,1035,1210,1040,1205,1045,1210,1055,1205,1060,1210]),'#f2ec2a',1);
})();
/* ReaFir 6 */
(function(){
 const c=mk(document.getElementById('cF6'),88,398,2.45,3),s=c.s;
 firGrid(c,41,30);
 el(s,'text',{x:c.X(1383),y:c.Y(1240)+4,'text-anchor':'end',style:'fill:#7d7a2e'},'(-150)');
 const y=pts([88,1000,105,960,125,928,145,922,160,924,180,933,210,935,225,955,235,955,250,942,270,965,285,980,295,978,310,957,325,995,345,980,365,985,400,1032,420,995,435,1035,458,1012,470,1030,478,1022,490,1068,498,1068,512,1038,525,1045,532,1065,550,1068,568,1062,580,1080,610,1082,615,1130,622,1082,655,1098,665,1092,695,1102,702,1120,708,1100,770,1110,775,1070,783,1120,793,1103,810,1120,818,1100,822,1125,855,1130,862,1142,868,1120,878,1138,882,1120,890,1142,898,1078,918,1135,945,1135,960,1066,985,1140,1000,1115,1005,1150,1060,1155,1100,1163,1140,1172,1200,1180,1280,1190,1318,1187]);
 line(c,y,'#5e5a3c',1,-160);
 line(c,y,'#f2ec2a',1.2);
 el(s,'line',{x1:0,x2:c.X(1322),y1:c.Y(576),y2:c.Y(576),stroke:'#e8000a','stroke-width':2});
 [498,910].forEach(x=>el(s,'circle',{cx:c.X(x),cy:c.Y(574),r:4.6,fill:'#fff',stroke:'#e8000a','stroke-width':1}));
})();
</script>
</body>
</html>
